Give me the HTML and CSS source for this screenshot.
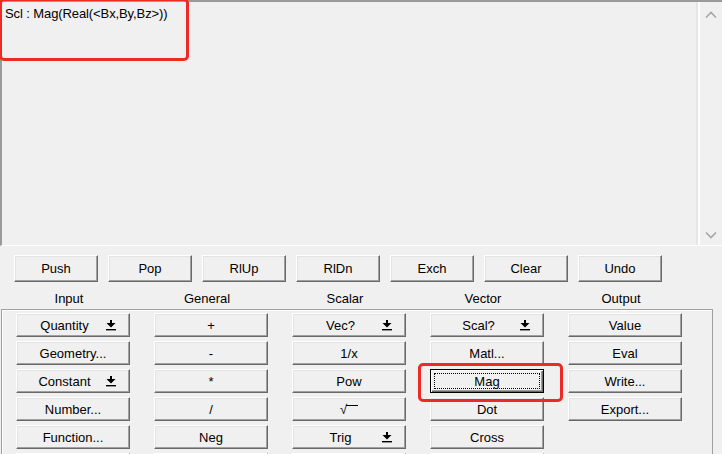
FILE: index.html
```html
<!DOCTYPE html>
<html>
<head>
<meta charset="utf-8">
<link rel="stylesheet" href="styles.css">
</head>
<body>
<div class="app">
  <div class="editor">
    <div class="text">Scl : Mag(Real(&lt;Bx,By,Bz&gt;))</div>
    <div class="scroll">
      <svg class="chev" width="12" height="8" viewBox="0 0 12 8"><path d="M1 6.5 L6 1.5 L11 6.5" fill="none" stroke="#a6a6a6" stroke-width="1.6"/></svg>
      <svg class="chev" width="12" height="8" viewBox="0 0 12 8"><path d="M1 1.5 L6 6.5 L11 1.5" fill="none" stroke="#a6a6a6" stroke-width="1.6"/></svg>
    </div>
    <div class="mark mark-top"></div>
  </div>

  <div class="stackbar">
    <button class="btn top">Push</button>
    <button class="btn top">Pop</button>
    <button class="btn top">RlUp</button>
    <button class="btn top">RlDn</button>
    <button class="btn top">Exch</button>
    <button class="btn top">Clear</button>
    <button class="btn top">Undo</button>
  </div>

  <div class="labels">
    <span>Input</span><span>General</span><span>Scalar</span><span>Vector</span><span>Output</span>
  </div>

  <div class="group">
    <div class="col">
      <button class="btn drop"><span class="lbl">Quantity</span><svg class="arr" width="10" height="11" viewBox="0 0 10 11"><path d="M4 0h2v3h3.5L5 7.5 0.5 3H4z" fill="#000"/><rect x="0" y="9" width="10" height="1.4" fill="#000"/></svg></button>
      <button class="btn">Geometry...</button>
      <button class="btn drop"><span class="lbl">Constant</span><svg class="arr" width="10" height="11" viewBox="0 0 10 11"><path d="M4 0h2v3h3.5L5 7.5 0.5 3H4z" fill="#000"/><rect x="0" y="9" width="10" height="1.4" fill="#000"/></svg></button>
      <button class="btn">Number...</button>
      <button class="btn">Function...</button>
      <button class="btn"></button>
    </div>
    <div class="col">
      <button class="btn">+</button>
      <button class="btn">-</button>
      <button class="btn">*</button>
      <button class="btn">/</button>
      <button class="btn">Neg</button>
      <button class="btn"></button>
    </div>
    <div class="col">
      <button class="btn drop"><span class="lbl">Vec?</span><svg class="arr" width="10" height="11" viewBox="0 0 10 11"><path d="M4 0h2v3h3.5L5 7.5 0.5 3H4z" fill="#000"/><rect x="0" y="9" width="10" height="1.4" fill="#000"/></svg></button>
      <button class="btn">1/x</button>
      <button class="btn">Pow</button>
      <button class="btn"><span class="sqrt">√<span class="bar"></span></span></button>
      <button class="btn drop"><span class="lbl">Trig</span><svg class="arr" width="10" height="11" viewBox="0 0 10 11"><path d="M4 0h2v3h3.5L5 7.5 0.5 3H4z" fill="#000"/><rect x="0" y="9" width="10" height="1.4" fill="#000"/></svg></button>
      <button class="btn"></button>
    </div>
    <div class="col">
      <button class="btn drop"><span class="lbl">Scal?</span><svg class="arr" width="10" height="11" viewBox="0 0 10 11"><path d="M4 0h2v3h3.5L5 7.5 0.5 3H4z" fill="#000"/><rect x="0" y="9" width="10" height="1.4" fill="#000"/></svg></button>
      <button class="btn">Matl...</button>
      <div class="markwrap">
        <button class="btn focus">Mag</button>
        <div class="mark mark-mag"></div>
      </div>
      <button class="btn">Dot</button>
      <button class="btn">Cross</button>
      <button class="btn"></button>
    </div>
    <div class="col">
      <button class="btn">Value</button>
      <button class="btn">Eval</button>
      <button class="btn">Write...</button>
      <button class="btn">Export...</button>
    </div>
  </div>
</div>
</body>
</html>
```

FILE: styles.css
```css
html, body {
  margin: 0;
  padding: 0;
  background: #f0f0f0;
  overflow: hidden;
}
body {
  width: 722px;
  height: 454px;
  font-family: "Liberation Sans", Arial, sans-serif;
  font-size: 13px;
  color: #000;
}
.app {
  display: flex;
  flex-direction: column;
  height: 454px;
  overflow: hidden;
}
.editor {
  position: relative;
  height: 246px;
  flex: none;
  box-sizing: border-box;
  display: flex;
  border-top: 2px solid #9a9a9a;
  border-left: 2px solid #9a9a9a;
  border-bottom: 1px solid #ffffff;
  background: #f0f0f0;
}
.text {
  flex: 1;
  padding: 4px 0 0 3px;
  font-size: 13px;
  letter-spacing: -0.1px;
}
.scroll {
  width: 22px;
  border-left: 2px solid #fdfdfd;
  box-shadow: -2px 0 0 #e6e6e6;
  display: flex;
  flex-direction: column;
  justify-content: space-between;
  align-items: center;
  padding: 9px 0 6px;
}
.chev { display: block; }
.mark {
  position: absolute;
  border: 3px solid #ee2a24;
  border-radius: 5px;
  pointer-events: none;
}
.mark-top {
  left: -3px;
  top: -4px;
  width: 184px;
  height: 57px;
}
.stackbar {
  display: flex;
  flex: none;
  gap: 10px;
  padding: 9px 0 0 14px;
}
.btn {
  box-sizing: border-box;
  margin: 0;
  padding: 0;
  font-family: "Liberation Sans", Arial, sans-serif;
  font-size: 13px;
  color: #000;
  background: #f0f0f0;
  border-top: 1px solid #ffffff;
  border-left: 1px solid #ffffff;
  border-right: 1px solid #696969;
  border-bottom: 1px solid #696969;
  box-shadow: inset -1px -1px 0 #a0a0a0, inset 1px 1px 0 #e3e3e3;
  display: flex;
  align-items: center;
  justify-content: center;
  line-height: 1;
  flex: none;
}
.btn.top {
  width: 84px;
  height: 27px;
}
.labels {
  display: flex;
  flex: none;
  height: 27px;
  align-items: center;
}
.labels span {
  width: 138px;
  text-align: center;
  padding-top: 5px;
}
.group {
  margin-left: 1px;
  width: 712px;
  flex: 1;
  min-height: 0;
  box-sizing: border-box;
  border-top: 1px solid #a0a0a0;
  border-left: 1px solid #a0a0a0;
  border-right: 1px solid #a0a0a0;
  box-shadow: inset 1px 1px 0 #fff;
  display: flex;
  gap: 24px;
  padding: 3px 0 0 14px;
}
.col {
  display: flex;
  flex-direction: column;
  gap: 4px;
  width: 114px;
}
.col .btn {
  width: 114px;
  height: 24px;
}
.btn.drop {
  justify-content: flex-start;
}
.btn.drop .lbl {
  flex: 1;
  text-align: center;
  padding-left: 6px;
}
.btn.drop .arr {
  margin-right: 13px;
  margin-top: 1px;
}
.sqrt {
  display: inline-flex;
  align-items: flex-start;
  font-size: 13px;
}
.sqrt .bar {
  display: inline-block;
  width: 12px;
  border-top: 1px solid #000;
  margin-top: 2px;
  margin-left: -1px;
}
.markwrap {
  position: relative;
  flex: none;
}
.btn.focus {
  position: relative;
  border: 1px solid #000;
  box-shadow: inset 1px 1px 0 #fff, inset -1px -1px 0 #696969, inset -2px -2px 0 #a0a0a0;
}
.btn.focus::after {
  content: "";
  position: absolute;
  left: 3px;
  top: 3px;
  right: 3px;
  bottom: 3px;
  border: 1px dotted #000;
}
.mark-mag {
  left: -12px;
  top: -6px;
  width: 139px;
  height: 33px;
}
```
